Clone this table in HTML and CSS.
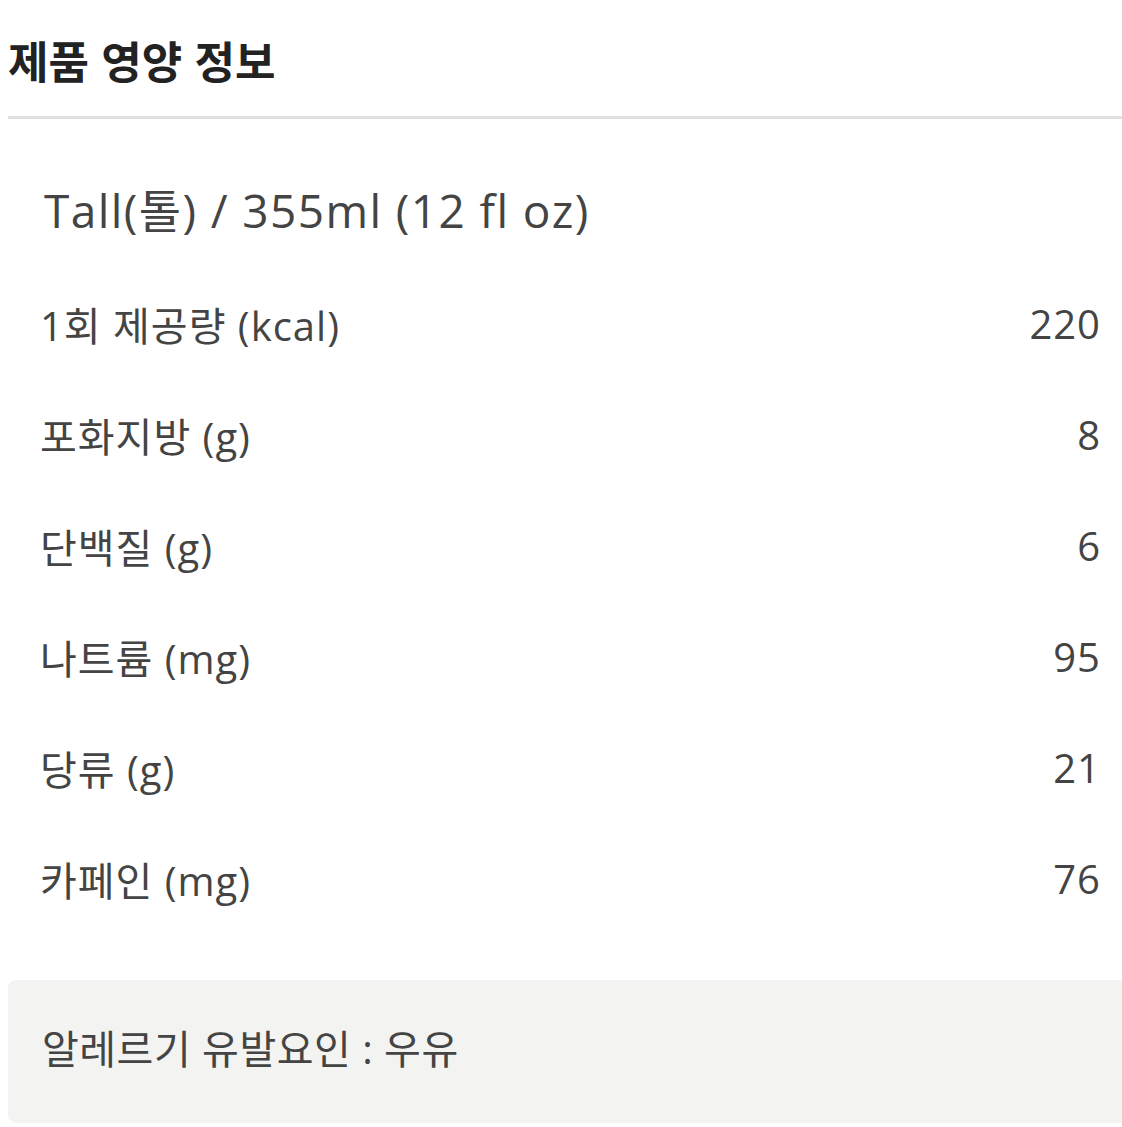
FILE: index.html
```html
<!DOCTYPE html>
<html lang="ko">
<head>
<meta charset="utf-8">
<link rel="stylesheet" href="styles.css">
</head>
<body>
<div class="page">
  <h2 class="title">제품 영양 정보</h2>
  <div class="size">Tall(톨) / 355ml (12 fl oz)</div>
  <ul class="rows">
    <li class="row"><span>1회 제공량 (kcal)</span><span>220</span></li>
    <li class="row"><span>포화지방 (g)</span><span>8</span></li>
    <li class="row"><span>단백질 (g)</span><span>6</span></li>
    <li class="row"><span>나트륨 (mg)</span><span>95</span></li>
    <li class="row"><span>당류 (g)</span><span>21</span></li>
    <li class="row"><span>카페인 (mg)</span><span>76</span></li>
  </ul>
  <div class="allergy">알레르기 유발요인 : 우유</div>
</div>
</body>
</html>
```
FILE: styles.css
```css
body {
  margin: 8px 0 0 8px;
  background: #fff;
  font-family: "Open Sans", "Noto Sans CJK KR", sans-serif;
  color: #444;
}
.title {
  margin: 0;
  padding: 28px 0 32px;
  font-family: "Noto Sans CJK KR", sans-serif;
  font-size: 44px;
  line-height: 48px;
  font-weight: 700;
  color: #222;
  border-bottom: 3px solid #e0e0e0;
}
.size {
  margin-top: 63px;
  padding-left: 36px;
  font-size: 46px;
  line-height: 56px;
  font-weight: 400;
  letter-spacing: 1.4px;
}
.rows {
  list-style: none;
  margin: 30px 0 0;
  padding: 0 21px 0 32px;
}
.row {
  display: flex;
  justify-content: space-between;
  align-items: center;
  height: 111px;
  font-size: 40px;
  font-weight: 400;
  letter-spacing: 1px;
}
.allergy {
  margin-top: 46px;
  height: 143px;
  box-sizing: border-box;
  padding: 0 0 10px 34px;
  display: flex;
  align-items: center;
  font-size: 40px;
  font-weight: 400;
  letter-spacing: 0.5px;
  background: #f3f3f2;
  border-radius: 8px 0 0 8px;
}
```
